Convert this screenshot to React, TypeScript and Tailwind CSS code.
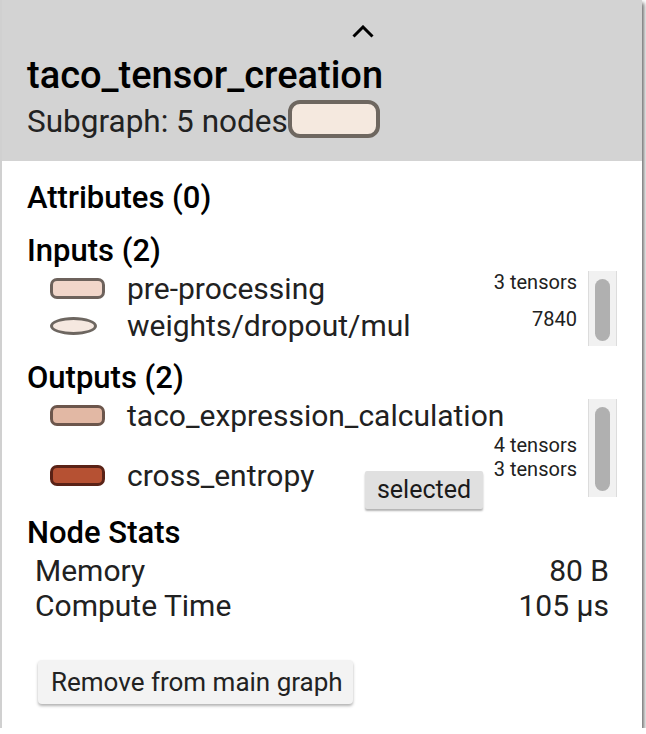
import React from "react";

function Track({ h, thumbTop, thumbH }: { h: number; thumbTop: number; thumbH: number }) {
  return (
    <div
      className="w-[29px] shrink-0 bg-[#f1f1f1] border-x border-[#dcdcdc] flex justify-center"
      style={{ height: h }}
    >
      <div className="w-[15px] rounded-full bg-[#b0b0b0]" style={{ marginTop: thumbTop, height: thumbH }} />
    </div>
  );
}

function RectIcon({ fill, stroke }: { fill: string; stroke: string }) {
  return (
    <div
      className="w-[55px] h-[21px] rounded-[7px] border-[3px]"
      style={{ backgroundColor: fill, borderColor: stroke }}
    />
  );
}

export default function App() {
  return (
    <div
      className="w-[642px] h-[728px] bg-white border-l-2 border-[#d0d0d0] shadow-[2px_3px_4px_rgba(0,0,0,0.6)] text-[#212121] overflow-hidden"
      style={{ fontFamily: "Roboto, 'Liberation Sans', sans-serif" }}
    >
      {/* Header */}
      <div className="bg-[#d3d3d3] h-[161px] pl-[25px] pt-[25px]">
        <svg width="24" height="14" viewBox="0 0 24 14" className="block ml-[324px]">
          <polyline points="2.5,11.5 12,2 21.5,11.5" fill="none" stroke="#000" strokeWidth="3" strokeLinejoin="miter" />
        </svg>
        <div className="mt-[14px] text-[38px] leading-[44px] font-medium text-black">taco_tensor_creation</div>
        <div className="mt-[3px] flex items-start">
          <span className="mt-[3px] text-[31.5px] leading-[38px] text-[#222]">Subgraph: 5 nodes</span>
          <div className="w-[92px] h-[38px] rounded-[12px] border-[4px] border-[#6e6760] bg-[#f5e9df]" />
        </div>
      </div>

      {/* Body */}
      <div className="pl-[25px] pr-[25px]">
        <div className="mt-[18px] text-[31px] leading-[38px] font-medium text-black">Attributes (0)</div>
        <div className="mt-[15px] text-[31px] leading-[38px] font-medium text-black">Inputs (2)</div>

        {/* Inputs list */}
        <div className="flex items-start">
          <div className="flex-1 min-w-0 pl-[23px]">
            <div className="flex items-center h-[37px]">
              <div className="w-[77px] shrink-0">
                <RectIcon fill="#f1d6ca" stroke="#6d625c" />
              </div>
              <span className="text-[30px] leading-[37px] whitespace-nowrap">pre-processing</span>
            </div>
            <div className="flex items-center h-[37px]">
              <div className="w-[77px] shrink-0">
                <div className="w-[47px] h-[18px] rounded-[50%] border-[3px] border-[#6d6660] bg-[#f5e8e0]" />
              </div>
              <span className="text-[30px] leading-[37px] whitespace-nowrap">weights/dropout/mul</span>
            </div>
          </div>
          <div className="w-[100px] shrink-0 mr-[11px] flex flex-col gap-[13px] text-right text-[20px] leading-[24px] whitespace-nowrap">
            <span>3 tensors</span>
            <span>7840</span>
          </div>
          <div className="mt-[1px]">
            <Track h={75} thumbTop={8} thumbH={62} />
          </div>
        </div>

        <div className="mt-[13px] text-[31px] leading-[38px] font-medium text-black">Outputs (2)</div>

        {/* Outputs list */}
        <div className="relative flex items-start">
          <div className="flex-1 min-w-0 pl-[23px] flex flex-col gap-[23px]">
            <div className="flex items-center h-[37px]">
              <div className="w-[77px] shrink-0">
                <RectIcon fill="#e2b8a4" stroke="#6c564c" />
              </div>
              <span className="text-[30px] leading-[37px] whitespace-nowrap">taco_expression_calculation</span>
            </div>
            <div className="flex items-center h-[37px]">
              <div className="w-[77px] shrink-0">
                <RectIcon fill="#b65133" stroke="#5a2216" />
              </div>
              <span className="text-[30px] leading-[37px] whitespace-nowrap">cross_entropy</span>
            </div>
          </div>
          <div className="w-[100px] shrink-0 mr-[11px] pt-[36px] flex flex-col text-right text-[20px] leading-[24px] whitespace-nowrap">
            <span>4 tensors</span>
            <span>3 tensors</span>
          </div>
          <div className="mt-[2px]">
            <Track h={98} thumbTop={8} thumbH={84} />
          </div>
          <div className="absolute left-[338px] top-[74px] w-[118px] h-[38px] rounded-[2px] bg-[#e0e0e0] shadow-[0_2px_2px_rgba(0,0,0,0.3)] flex items-center justify-center text-[25px] leading-[38px] text-[#1a1a1a]">
            selected
          </div>
        </div>

        <div className="mt-[17px] text-[31px] leading-[38px] font-medium text-black">Node Stats</div>
        <div className="mt-[1px] px-[8px] text-[30px] leading-[35px]">
          <div className="flex justify-between">
            <span>Memory</span>
            <span>80 B</span>
          </div>
          <div className="flex justify-between">
            <span>Compute Time</span>
            <span>105 μs</span>
          </div>
        </div>

        <button className="mt-[37px] ml-[11px] h-[44px] w-[315px] rounded-[4px] bg-[#f3f3f3] shadow-[0_2px_3px_rgba(0,0,0,0.3)] text-left pl-[13px] text-[26px] leading-[44px] text-[#222]">
          Remove from main graph
        </button>
      </div>
    </div>
  );
}
